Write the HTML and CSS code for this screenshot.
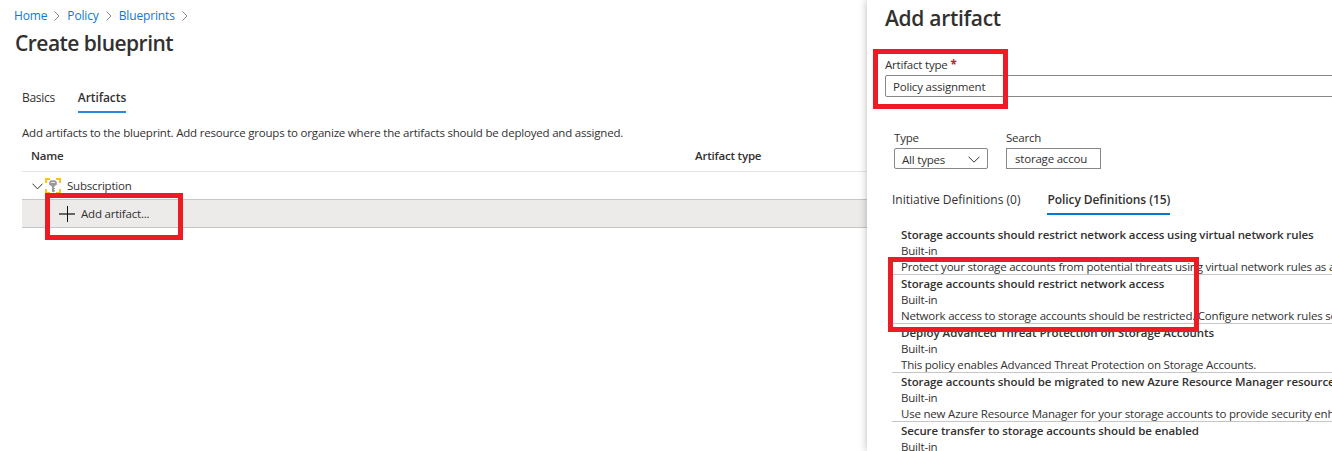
FILE: index.html
```html
<!DOCTYPE html>
<html lang="en">
<head>
<meta charset="utf-8">
<title>Create blueprint</title>
<link rel="stylesheet" href="styles.css">
</head>
<body>
<div class="portal">
  <main class="blade">
    <nav class="crumbs">
      <a class="crumb-home">Home</a><svg class="sep" viewBox="0 0 6 10"><path d="M.5.5 5 5 .5 9.500"/></svg>
      <a class="crumb-policy">Policy</a><svg class="sep" viewBox="0 0 6 10"><path d="M.5.5 5 5 .5 9.500"/></svg>
      <a class="crumb-blueprints">Blueprints</a><svg class="sep" viewBox="0 0 6 10"><path d="M.5.5 5 5 .5 9.500"/></svg>
    </nav>
    <h1 class="title"><span>Create blueprint</span></h1>
    <div class="tabs">
      <span class="tab basics">Basics</span>
      <span class="tab active artifacts">Artifacts</span>
    </div>
    <p class="intro"><span>Add artifacts to the blueprint. Add resource groups to organize where the artifacts should be deployed and assigned.</span></p>
    <div class="grid">
      <div class="grid-head"><span class="col-name">Name</span><span class="col-type">Artifact type</span></div>
      <div class="grid-row">
        <svg class="chevron" viewBox="0 0 11 7"><path d="M.5.7 5.500 5.900 10.500.7"/></svg>
        <svg class="key" viewBox="0 0 16 16">
          <path class="corner" d="M5 1H1V5M11 1H15V5M5 15H1V11M11 15H15V11"/>
          <path class="key-head" d="M5.800 2.300H10.200L11.800 4V6.200L9.800 8.200H6.200L4.200 6.200V4Z"/>
          <path class="key-stem" d="M7 8H9V10H10V11H9V12H10V13L8.300 14.500 7 13.500Z"/>
          <path class="key-mark" d="M6 4.500H10"/>
        </svg>
        <span class="subscription">Subscription</span>
      </div>
      <div class="grid-row add">
        <svg class="plus" viewBox="0 0 16 16"><path d="M0 8H16" class="across"/><path d="M8.500 0V16"/></svg>
        <span class="add-label">Add artifact...</span>
      </div>
    </div>
  </main>
  <aside class="panel">
    <h2 class="title panel-title"><span>Add artifact</span></h2>
    <div class="field-label"><span class="type-label">Artifact type</span> <b class="star">*</b></div>
    <div class="type-box"><span>Policy assignment</span></div>
    <div class="filters">
      <div class="filter"><span class="filter-label">Type</span>
        <div class="select"><span class="all-types">All types</span><svg class="drop" viewBox="0 0 12 7"><path d="M.5.7 6 6.200 11.500.7"/></svg></div></div>
      <div class="filter"><span class="filter-label">Search</span>
        <div class="search"><span>storage accou</span></div></div>
    </div>
    <div class="tabs panel-tabs">
      <span class="tab initiatives">Initiative Definitions (0)</span>
      <span class="tab active policies">Policy Definitions (15)</span>
    </div>
    <div class="list">
      <div class="item"><b>Storage accounts should restrict network access using virtual network rules</b><i>Built-in</i><p>Protect your storage accounts from potential threats using virtual network rules as a</p></div>
      <div class="item"><b>Storage accounts should restrict network access</b><i>Built-in</i><p>Network access to storage accounts should be restricted. Configure network rules so</p></div>
      <div class="item"><b class="wide">Deploy Advanced Threat Protection on Storage Accounts</b><i>Built-in</i><p>This policy enables Advanced Threat Protection on Storage Accounts.</p></div>
      <div class="item"><b>Storage accounts should be migrated to new Azure Resource Manager resource</b><i>Built-in</i><p>Use new Azure Resource Manager for your storage accounts to provide security enh</p></div>
      <div class="item"><b>Secure transfer to storage accounts should be enabled</b><i>Built-in</i></div>
    </div>
  </aside>
  <div class="mark mark-add"></div>
  <div class="mark mark-type"></div>
  <div class="mark mark-policy"></div>
</div>
</body>
</html>
```
FILE: styles.css
```css
* { box-sizing: border-box; }
body { margin: 0; background: #fff; color: #323130; font: 11.5px/16px "Open Sans", "Noto Sans", sans-serif; letter-spacing: -.2px; }
.portal { position: relative; display: flex; width: 1332px; height: 451px; overflow: hidden; white-space: nowrap; }
.blade { width: 867px; flex: none; padding-top: 7px; }
svg { flex: none; fill: none; stroke: #323130; }
.crumbs { display: flex; align-items: center; height: 17px; padding-left: 14px; color: #0f78d4; font-size: 12px; letter-spacing: -.15px; }
.sep { width: 6px; height: 10px; margin: 0 7px; stroke: #8a8886; }
.title { margin: 0; font-size: 21px; line-height: 28px; font-weight: 600; padding: 5px 0 0 15px; height: 56px; letter-spacing: -.53px; }
.tabs { display: flex; height: 33px; padding-left: 22px; gap: 23px; font-size: 12px; letter-spacing: 0; }
.tab { padding-top: 10px; height: 33px; }
.basics { letter-spacing: -.3px; }
.artifacts { letter-spacing: -.08px; }
.active { font-weight: 600; border-bottom: 2px solid #2b88d8; }
.intro { margin: 0; padding: 12px 0 0 22px; height: 32px; }
.grid { padding-left: 22px; }
.grid-head { display: flex; height: 27px; padding: 3px 0 0 9px; font-weight: 600; border-bottom: 1px solid #e5e5e5; }
.col-name { width: 664px; }
.grid-row { display: flex; align-items: center; height: 27px; padding: 1px 0 0 10px; }
.chevron { width: 11px; height: 7px; margin-right: 2px; }
.key { width: 16px; height: 16px; margin-right: 6px; }
.corner { stroke: #fcc419; stroke-width: 2; }
.key-head, .key-stem { fill: #999; stroke: none; }
.key-mark { stroke: #e6e6e6; }
.add { height: 29px; padding: 0 0 0 37px; background: #edebe9; border: solid #c8c6c4; border-width: 1px 0; }
.plus { width: 16px; height: 16px; margin-right: 6px; stroke: #111; }
.across { stroke: #666; stroke-width: 2; }
.panel { width: 465px; flex: none; height: 451px; background: #fff; box-shadow: 0 0 8px rgba(0,0,0,.28); overflow: hidden; }
.panel-title { padding: 4px 0 0 18px; height: 57px; letter-spacing: -.3px; }
.field-label { height: 18px; padding-left: 18px; }
.star { color: #a4262c; }
.type-box { margin-left: 18px; width: 460px; height: 22px; border: 1px solid #8a8886; border-radius: 2px; padding: 3px 7px 0; }
.filters { display: flex; gap: 18px; padding: 32px 0 0 27px; height: 84px; }
.filter-label { display: block; height: 19px; padding-top: 1px; }
.select, .search { display: flex; align-items: center; justify-content: space-between; width: 94px; height: 21px; border: 1px solid #8a8886; border-radius: 2px; padding: 2px 7px 0; }
.search { width: 95px; border-radius: 0; padding: 0 8px; }
.drop { width: 12px; height: 7px; }
.panel-tabs { padding-left: 25px; gap: 27px; height: 45px; padding-top: 10px; }
.panel-tabs .tab { height: 24px; padding-top: 1px; }
.policies { letter-spacing: -.08px; }
.panel-tabs .active { border-color: #0078d4; }
.list { margin-left: 25px; }
.item { height: 49px; padding: 1px 0 0 9px; border-bottom: 1px solid #c8c6c4; }
.item b, .item i, .item p { display: block; width: max-content; margin: 0; font-style: normal; }
.item b { font-weight: 600; letter-spacing: -.09px; }
.item .wide { letter-spacing: 0; }
.mark { position: absolute; border: 5px solid #ed1c24; }
.mark-add { left: 45px; top: 193px; width: 138px; height: 47px; }
.mark-type { left: 873px; top: 49px; width: 135px; height: 60px; }
.mark-policy { left: 888px; top: 257px; width: 311px; height: 75px; }
```
